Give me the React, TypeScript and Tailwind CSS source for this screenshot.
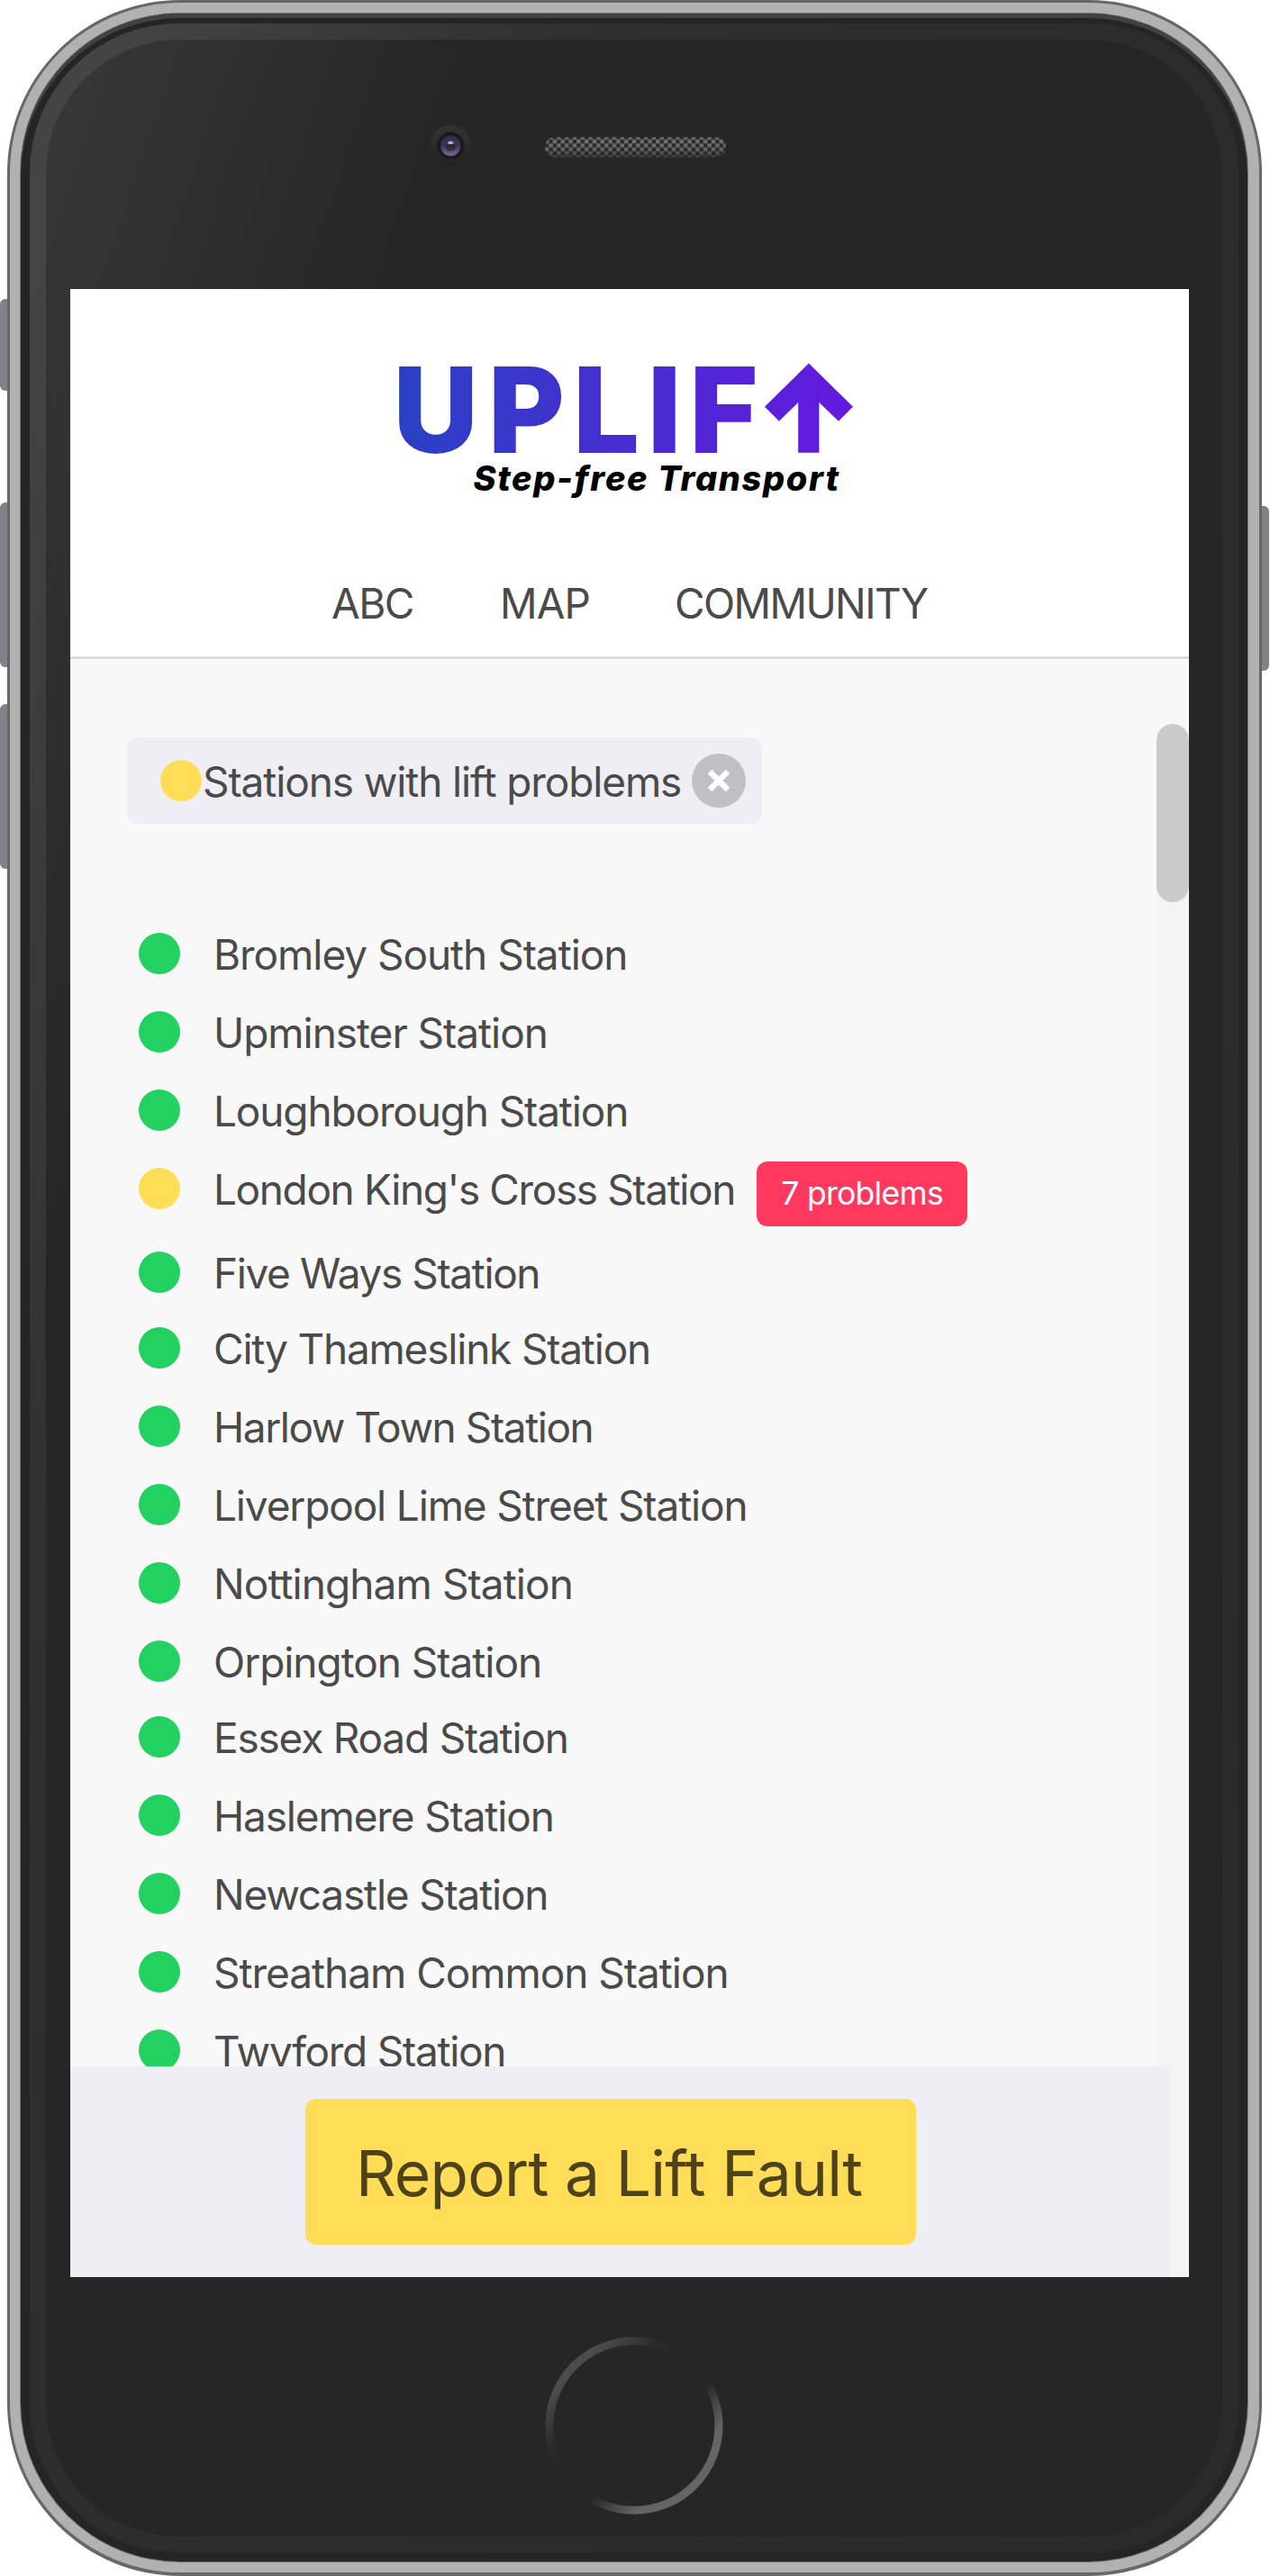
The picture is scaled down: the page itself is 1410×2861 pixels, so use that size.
import React from "react";

type Station = { name: string; gap: string; tracking: string; problems?: number };

const stations: Station[] = [
  { name: "Bromley South Station", gap: "mb-[41px]", tracking: "tracking-[-1.05px]" },
  { name: "Upminster Station", gap: "mb-[41px]", tracking: "tracking-[-1.04px]" },
  { name: "Loughborough Station", gap: "mb-[41px]", tracking: "tracking-[-1.15px]" },
  { name: "London King's Cross Station", gap: "mb-[47px]", tracking: "tracking-[-1.39px]", problems: 7 },
  { name: "Five Ways Station", gap: "mb-[38px]", tracking: "tracking-[-1.39px]" },
  { name: "City Thameslink Station", gap: "mb-[41px]", tracking: "tracking-[-1.21px]" },
  { name: "Harlow Town Station", gap: "mb-[41px]", tracking: "tracking-[-1.44px]" },
  { name: "Liverpool Lime Street Station", gap: "mb-[41px]", tracking: "tracking-[-1.15px]" },
  { name: "Nottingham Station", gap: "mb-[41px]", tracking: "tracking-[-0.92px]" },
  { name: "Orpington Station", gap: "mb-[38px]", tracking: "tracking-[-1.04px]" },
  { name: "Essex Road Station", gap: "mb-[41px]", tracking: "tracking-[-1.21px]" },
  { name: "Haslemere Station", gap: "mb-[41px]", tracking: "tracking-[-1.15px]" },
  { name: "Newcastle Station", gap: "mb-[41px]", tracking: "tracking-[-1.21px]" },
  { name: "Streatham Common Station", gap: "mb-[41px]", tracking: "tracking-[-1.04px]" },
  { name: "Twyford Station", gap: "mb-0", tracking: "tracking-[-1.28px]" },
];

function CameraAndSpeaker() {
  return (
    <svg className="mt-[86px] ml-[419px] block" width="350" height="60" viewBox="470 130 350 60">
      <defs>
        <linearGradient id="bezel" x1="0" y1="0" x2="0" y2="1">
          <stop offset="0" stopColor="#343434" />
          <stop offset="1" stopColor="#222" />
        </linearGradient>
        <linearGradient id="lens" x1="0" y1="0" x2="0" y2="1">
          <stop offset="0" stopColor="#36294f" />
          <stop offset="0.5" stopColor="#42305e" />
          <stop offset="1" stopColor="#7b6c90" />
        </linearGradient>
        <linearGradient id="pupil" x1="0" y1="0" x2="0" y2="1">
          <stop offset="0" stopColor="#57515f" />
          <stop offset="0.5" stopColor="#2a2630" />
          <stop offset="1" stopColor="#3b3447" />
        </linearGradient>
        <linearGradient id="meshFade" x1="0" y1="0" x2="0" y2="1">
          <stop offset="0" stopColor="#262626" stopOpacity="0" />
          <stop offset="0.55" stopColor="#262626" stopOpacity="0.15" />
          <stop offset="1" stopColor="#262626" stopOpacity="0.7" />
        </linearGradient>
        <pattern id="mesh" width="8.8" height="8.8" patternUnits="userSpaceOnUse" x="605" y="150.6">
          <rect width="8.8" height="8.8" fill="#2a2a2a" />
          <rect x="4.4" width="4.4" height="4.4" fill="#747474" />
          <rect y="4.4" width="4.4" height="4.4" fill="#747474" />
        </pattern>
      </defs>
      <circle cx="500.3" cy="161.5" r="22.5" fill="url(#bezel)" />
      <circle cx="500.3" cy="161.8" r="15" fill="#19181d" />
      <circle cx="500.3" cy="162" r="11.2" fill="url(#lens)" />
      <circle cx="500.3" cy="162" r="6" fill="url(#pupil)" />
      <ellipse cx="500.3" cy="158.6" rx="3" ry="1.5" fill="#b9b6bd" />
      <rect x="605" y="152.5" width="201" height="22" rx="11" fill="url(#mesh)" />
      <rect x="605" y="152.5" width="201" height="22" rx="11" fill="url(#meshFade)" />
    </svg>
  );
}

function Logo() {
  return (
    <svg className="mt-[69px] ml-[352px] block" width="530" height="180" viewBox="430 390 530 180">
      <defs>
        <linearGradient id="brand" gradientUnits="userSpaceOnUse" x1="443" y1="450" x2="947" y2="450">
          <stop offset="0" stopColor="#2a40c4" />
          <stop offset="1" stopColor="#6519dd" />
        </linearGradient>
      </defs>
      <text
        x="436.7 542.3 636.6 719.2 765.7"
        y="502.3"
        fontFamily="Inter, sans-serif"
        fontSize="129"
        fontWeight="800"
        fill="url(#brand)"
        stroke="url(#brand)"
        strokeWidth="1.8"
      >
        UPLIF
      </text>
      <path
        d="M897.9 403.5 L947 451.7 L931 467.7 L909.4 447 V502.8 H886.2 V447 L865 467.7 L849 451.7 Z"
        fill="url(#brand)"
      />
      <text
        x="525.5"
        y="545"
        fontFamily="Inter, sans-serif"
        fontSize="38"
        fontWeight="800"
        fontStyle="italic"
        letterSpacing="1.62"
        fill="#000"
      >
        Step-free Transport
      </text>
    </svg>
  );
}

function Header() {
  return (
    <header className="h-[411px] shrink-0 border-b-[3px] border-[#dcdcdc] bg-white pt-px">
      <div className="-mt-px">
        <Logo />
      </div>
      <nav className="mt-[70px] flex h-[60px] items-center pl-[290px] text-[46px] leading-[60px]">
        <a className="w-[187px] tracking-[-1.6px]">ABC</a>
        <a className="w-[194px] tracking-[-0.9px]">MAP</a>
        <a className="tracking-[-1.6px]">COMMUNITY</a>
      </nav>
    </header>
  );
}

function FilterChip() {
  return (
    <div className="mt-[87px] ml-[63px] flex h-24 w-[705px] items-center rounded-xl bg-[#efeef5] pr-[18px] pl-[37px]">
      <span className="size-[46px] rounded-full bg-[#ffdd57]" />
      <span className="pt-0.5 pl-px text-[46px] tracking-[-1.12px] whitespace-nowrap">Stations with lift problems</span>
      <button className="ml-auto flex size-[60px] shrink-0 items-center justify-center rounded-full bg-[#c0bfc4]">
        <svg width="26" height="26" viewBox="0 0 26 26" stroke="#fff" strokeWidth="6.5">
          <path d="M3 3 L23 23 M23 3 L3 23" />
        </svg>
      </button>
    </div>
  );
}

function StationRow({ name, gap, tracking, problems }: Station) {
  return (
    <li className={`flex h-[46px] items-center whitespace-nowrap ${gap}`}>
      <span className={`size-[46px] shrink-0 rounded-full ${problems ? "bg-[#ffdd57]" : "bg-[#23d160]"}`} />
      <span className={`pt-0.5 pl-[37px] text-[46px] ${tracking}`}>{name}</span>
      {problems && (
        <span className="mt-3 ml-6 flex h-[72px] w-[234px] shrink-0 items-center justify-center rounded-xl bg-[#ff3860] text-[35.5px] tracking-[-0.7px] text-white">
          {problems} problems
        </span>
      )}
    </li>
  );
}

function Screen() {
  return (
    <div className="relative flex h-[2208px] w-[1242px] flex-col overflow-hidden bg-[#f4f4f4] font-[Inter,sans-serif] leading-[46px] text-[#4a4a4a]">
      <Header />
      <main className="flex h-[1563px] bg-[#f8f8f8]">
        <div className="w-[1206px] overflow-hidden">
          <FilterChip />
          <ul className="mt-[121px] pl-[76px]">
            {stations.map((s) => (
              <StationRow key={s.name} {...s} />
            ))}
          </ul>
        </div>
        <div className="mt-[72px] w-9 rounded-t-[18px] bg-[#f4f4f4]">
          <div className="h-[198px] rounded-[18px] bg-[#cbcbcb]" />
        </div>
      </main>
      <footer className="flex h-[234px] w-[1221px] items-center bg-[#efeef5] pl-[261px]">
        <button className="flex h-[162px] w-[678px] items-center rounded-xl bg-[#ffdd57] pt-[3px] pl-14 text-[69.5px] tracking-[-0.86px] whitespace-nowrap text-[#4d421a]">
          Report a Lift Fault
        </button>
      </footer>
    </div>
  );
}

function HomeButton() {
  return (
    <svg className="mt-[66px] ml-[554px] block" width="198" height="198" viewBox="0 0 198 198">
      <defs>
        <linearGradient id="ring" x1="0" y1="0" x2="1" y2="1">
          <stop offset="0.16" stopColor="#4c4c4c" />
          <stop offset="0.32" stopColor="#2a2a2a" />
          <stop offset="0.42" stopColor="#262626" />
          <stop offset="0.59" stopColor="#262626" />
          <stop offset="0.76" stopColor="#646464" />
          <stop offset="1" stopColor="#666" />
        </linearGradient>
      </defs>
      <circle cx="99" cy="99" r="94" fill="none" stroke="url(#ring)" strokeWidth="9" />
    </svg>
  );
}

export default function App() {
  return (
    <div className="relative h-[2861px] w-[1410px] overflow-hidden bg-white">
      <span className="absolute top-[332px] left-0 h-[102px] w-4 rounded-l-md bg-[#828187]" />
      <span className="absolute top-[558px] left-0 h-[183px] w-4 rounded-l-md bg-[#828187]" />
      <span className="absolute top-[782px] left-0 h-[183px] w-4 rounded-l-md bg-[#828187]" />
      <span className="absolute top-[562px] right-px h-[183px] w-4 rounded-r-md bg-[#828187]" />
      <div className="relative ml-2 h-[2861px] w-[1393px] rounded-[192px] border-[3px] border-b-4 border-[#676767] bg-[#b1b1b1] pt-3 pr-[13px] pb-3 pl-3">
        <div className="h-full rounded-[177px] bg-[#252525] pt-[11px] pr-2.5 pb-2.5 pl-2.5 shadow-[inset_0_5px_0_#414341,0_0_0_1px_#777]">
          <div className="h-full rounded-[165px] bg-[linear-gradient(109deg,#444_100px,#303030_560px,#2d2d2d_900px,#2a2a2a_100%)] px-[18px] py-[18px]">
            <div className="flex h-full flex-col rounded-[148px] bg-[linear-gradient(109deg,#383838_0px,#262626_440px)] pl-[27px]">
              <div className="-ml-[27px] h-[277px] shrink-0 overflow-hidden">
                <CameraAndSpeaker />
              </div>
              <Screen />
              <div className="-ml-[27px]">
                <HomeButton />
              </div>
            </div>
          </div>
        </div>
      </div>
    </div>
  );
}
